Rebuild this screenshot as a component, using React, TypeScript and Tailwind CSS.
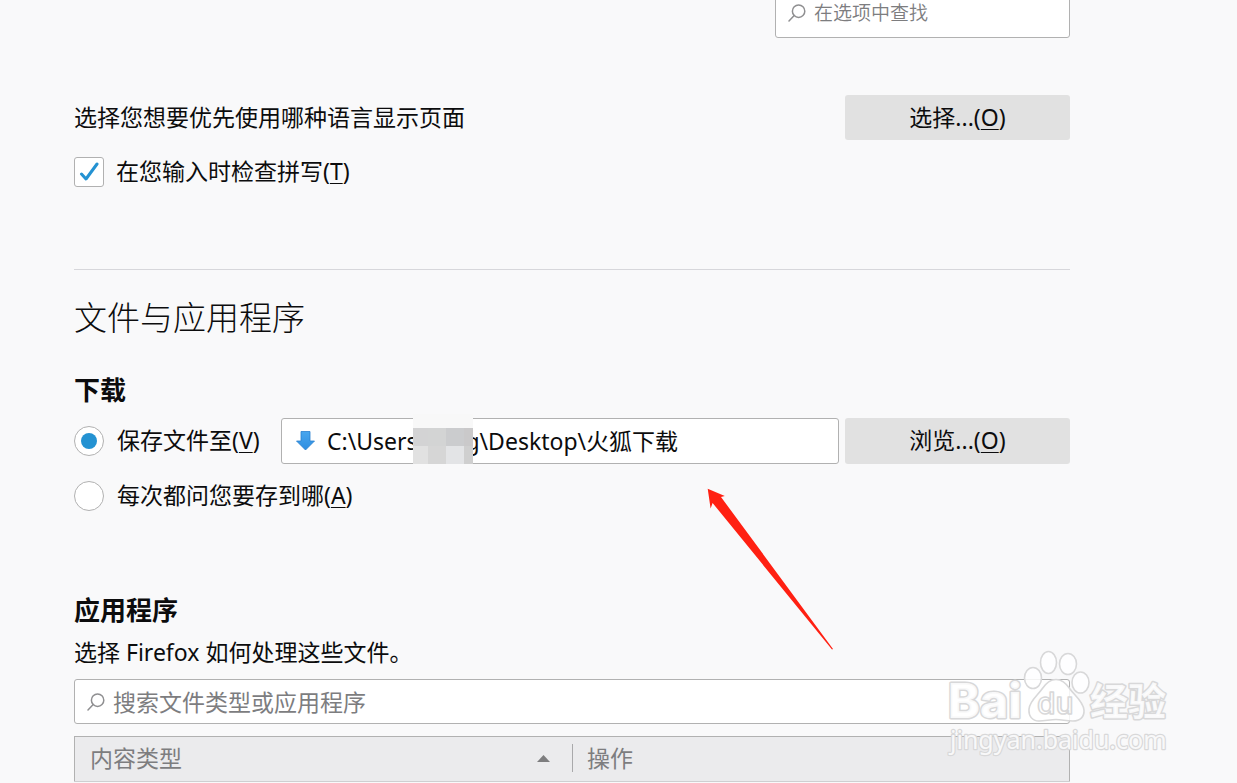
import { useState } from "react";
import type { ReactNode } from "react";

function SearchIcon() {
  return (
    <svg aria-hidden="true" viewBox="0 0 18 18" className="h-[18px] w-[18px] shrink-0" fill="none" stroke="#8f8f91" strokeWidth="1.5">
      <circle cx="10.6" cy="7.2" r="6.2" />
      <path d="M6.2 11.6 L1 17" strokeLinecap="round" />
    </svg>
  );
}

function DownloadIcon() {
  return (
    <svg aria-hidden="true" viewBox="0 0 19 20" className="h-5 w-[19px] shrink-0">
      <defs>
        <linearGradient id="dl" x1="0" y1="0" x2="0" y2="1">
          <stop offset="0" stopColor="#48a6ee" />
          <stop offset="1" stopColor="#2e8de0" />
        </linearGradient>
      </defs>
      <path d="M5 0.5 H14 V10 H18.5 L9.5 19 L0.5 10 H5 Z" fill="url(#dl)" stroke="#2a80cf" strokeWidth="0.8" />
    </svg>
  );
}

function ActionButton({ text, accessKey }: { text: string; accessKey: string }) {
  return (
    <button type="button" className="w-[225px] shrink-0 rounded-[3px] bg-[#e1e1e1] pb-0.5 text-center">
      {text}(<u className="underline decoration-1 underline-offset-3">{accessKey}</u>)
    </button>
  );
}

function SearchBox({ label, className }: { label: string; className: string }) {
  return (
    <div className={"flex items-center gap-2 rounded-[3px] border border-[#b1b1b1] bg-white pl-3 " + className}>
      <SearchIcon />
      <input
        type="text"
        aria-label={label}
        placeholder={label}
        className="h-full min-w-0 flex-1 bg-transparent outline-none placeholder:text-[#7d7d7f]"
      />
    </div>
  );
}

function Radio({ id, checked, onSelect, children }: { id: string; checked: boolean; onSelect: () => void; children: ReactNode }) {
  return (
    <label htmlFor={id} className="flex items-center gap-[13px]">
      <span className="grid shrink-0 place-items-center">
        <input
          id={id}
          type="radio"
          name="save"
          checked={checked}
          onChange={onSelect}
          className="peer col-start-1 row-start-1 h-[30px] w-[30px] appearance-none rounded-full border border-[#b1b1b1] bg-white"
        />
        <span className="pointer-events-none col-start-1 row-start-1 hidden h-4 w-4 rounded-full bg-[#2492d2] peer-checked:block" />
      </span>
      <span className="pb-0.5 whitespace-nowrap">{children}</span>
    </label>
  );
}

function Redaction() {
  return (
    <div aria-hidden="true" className="pointer-events-none absolute -top-[5px] left-[131px] grid w-[60px] grid-cols-[15px_18px_18px_9px] grid-rows-[14px_18px_18px]">
      <span className="col-span-4 bg-[#f8f8f8]" />
      <span className="bg-[#d3d3d4]" />
      <span className="bg-[#d3d4d4]" />
      <span className="bg-[#cbccce]" />
      <span className="bg-[#cac9ca]" />
      <span className="bg-[#e1e1e1]" />
      <span className="bg-[#d6d6d6]" />
      <span className="bg-[#e3e4e6]" />
      <span className="bg-[#cfcfcf]" />
    </div>
  );
}

function RedArrow() {
  return (
    <svg aria-hidden="true" viewBox="0 0 126 162" className="pointer-events-none absolute top-[488px] left-[707px] h-[162px] w-[126px]">
      <path d="M0.7 0.8 L17.8 8 L14 9 L126 161 L125 161.6 L5.6 15 L3.6 20.4 Z" fill="#ff2012" />
    </svg>
  );
}

function Watermark() {
  return (
    <svg
      aria-hidden="true"
      viewBox="0 0 230 110"
      className="pointer-events-none absolute top-[648px] left-[945px] h-[110px] w-[230px]"
      fill="#ffffff"
      fillOpacity="0.85"
      stroke="#d8d8d9"
      strokeWidth="1.6"
      strokeLinejoin="round"
    >
      <g>
        <ellipse cx="103.500" cy="14.500" rx="8" ry="11" />
        <ellipse cx="123" cy="16" rx="8.500" ry="10.500" />
        <ellipse cx="88" cy="30" rx="8.500" ry="10.500" />
        <ellipse cx="135.500" cy="34.500" rx="8.500" ry="10.500" />
        <path d="M111 31.500 C117 31.500 121 35 125 41 C129 47 138 53 139 62 C139.500 69 135 73 128 73 C121 73 117 71.500 111 71.500 C105 71.500 100 73 94 73 C87 73 83.500 68 84 61 C84.500 53 93 47 97 41 C101 35 105 31.500 111 31.500 Z" />
      </g>
      <text x="3" y="70" fontSize="48" fontWeight="800" style={{ fontFamily: "Inter, sans-serif", paintOrder: "stroke" }} strokeWidth="3">
        Bai
      </text>
      <text x="92" y="66" fontSize="30" fontWeight="500" style={{ fontFamily: "Inter, sans-serif" }}>
        du
      </text>
      <text x="5" y="101" fontSize="25" fontWeight="400" style={{ fontFamily: '"Noto Sans", sans-serif', paintOrder: "stroke" }} strokeWidth="2.4">
        jingyan.baidu.com
      </text>
      <text x="145" y="67" fontSize="38" fontWeight="700" style={{ fontFamily: '"Noto Sans CJK SC", sans-serif', paintOrder: "stroke" }} strokeWidth="3">
        经验
      </text>
    </svg>
  );
}

export default function App() {
  const [spell, setSpell] = useState(true);
  const [ask, setAsk] = useState(false);
  const [path, setPath] = useState("C:\\Users\u00a0\u00a0\u00a0\u00a0\u00a0\u00a0\u00a0\u00a0g\\Desktop\\火狐下载");

  return (
    <div className="relative min-h-screen overflow-hidden bg-[#f9f9fa] font-['Noto_Sans','Noto_Sans_CJK_SC',sans-serif] text-[23px] leading-8 text-[#0c0c0d]">
      <main className="mr-6 ml-[74px] max-w-[996px]">
        <div className="flex h-[38px] items-end justify-end">
          <SearchBox label="在选项中查找" className="h-[50px] w-[295px] text-[19px] font-[350]" />
        </div>

        <section className="border-b border-[#d7d7db] pt-[57px] pb-[81px]">
          <div className="flex h-[45px] items-stretch justify-between">
            <p className="self-center pb-0.5">选择您想要优先使用哪种语言显示页面</p>
            <ActionButton text="选择..." accessKey="O" />
          </div>
          <label htmlFor="spell" className="mt-4 flex h-8 items-center gap-3">
            <span className="grid shrink-0 place-items-center">
              <input
                id="spell"
                type="checkbox"
                checked={spell}
                onChange={(e) => setSpell(e.target.checked)}
                className="peer col-start-1 row-start-1 h-[30px] w-[30px] appearance-none rounded-[3px] border border-[#b1b1b1] bg-white"
              />
              <svg aria-hidden="true" viewBox="0 0 20 20" className="pointer-events-none col-start-1 row-start-1 hidden h-5 w-5 peer-checked:block" fill="none" stroke="#2492d2" strokeWidth="3" strokeLinecap="round" strokeLinejoin="round">
                <path d="M2.500 12 L7 17 L18 2" />
              </svg>
            </span>
            <span className="pb-0.5">
              在您输入时检查拼写(<u className="underline decoration-1 underline-offset-3">T</u>)
            </span>
          </label>
        </section>

        <h1 className="mt-6 text-[33px] leading-[48px] font-light">文件与应用程序</h1>

        <section>
          <h2 className="mt-[30px] text-[26px] leading-9 font-bold">下载</h2>
          <div className="mt-[10px] flex h-[46px] items-stretch gap-[6px]">
            <div className="flex w-[201px] shrink-0 items-center">
              <Radio id="save-to" checked={!ask} onSelect={() => setAsk(false)}>
                保存文件至(<u className="underline decoration-1 underline-offset-3">V</u>)
              </Radio>
            </div>
            <div className="relative flex min-w-0 flex-1 items-center gap-3 rounded-[3px] border border-[#b1b1b1] bg-white pl-[14px]">
              <DownloadIcon />
              <input
                type="text"
                aria-label="保存文件至"
                value={path}
                onChange={(e) => setPath(e.target.value)}
                className="h-full min-w-0 flex-1 bg-transparent pb-0.5 outline-none"
              />
              <Redaction />
            </div>
            <ActionButton text="浏览..." accessKey="O" />
          </div>
          <div className="mt-4 flex h-8 items-center">
            <Radio id="ask" checked={ask} onSelect={() => setAsk(true)}>
              每次都问您要存到哪(<u className="underline decoration-1 underline-offset-3">A</u>)
            </Radio>
          </div>
        </section>

        <section>
          <h2 className="mt-20 text-[26px] leading-9 font-bold">应用程序</h2>
          <p className="mt-2">选择 Firefox 如何处理这些文件。</p>
          <SearchBox label="搜索文件类型或应用程序" className="mt-[11px] h-[45px]" />
          <table className="mt-3 w-full table-fixed border border-[#b1b1b1] bg-[#ebebed] text-[#7d7d7f]">
            <thead>
              <tr className="h-[45px] border-b border-[#cfcfd1]">
                <th scope="col" className="p-0 pb-0.5 text-left font-normal">
                  <div className="flex h-7 items-center justify-between pr-[22px] pl-[15px]">
                    内容类型
                    <svg aria-hidden="true" viewBox="0 0 13 7" className="h-[7px] w-[13px]">
                      <path d="M0 7 L6.500 0 L13 7 Z" fill="#7d7d7f" />
                    </svg>
                  </div>
                </th>
                <th scope="col" className="p-0 pb-0.5 text-left font-normal">
                  <div className="flex h-7 items-center border-l border-[#a9a9ab] pl-[14px]">操作</div>
                </th>
              </tr>
            </thead>
          </table>
        </section>
      </main>
      <RedArrow />
      <Watermark />
    </div>
  );
}
